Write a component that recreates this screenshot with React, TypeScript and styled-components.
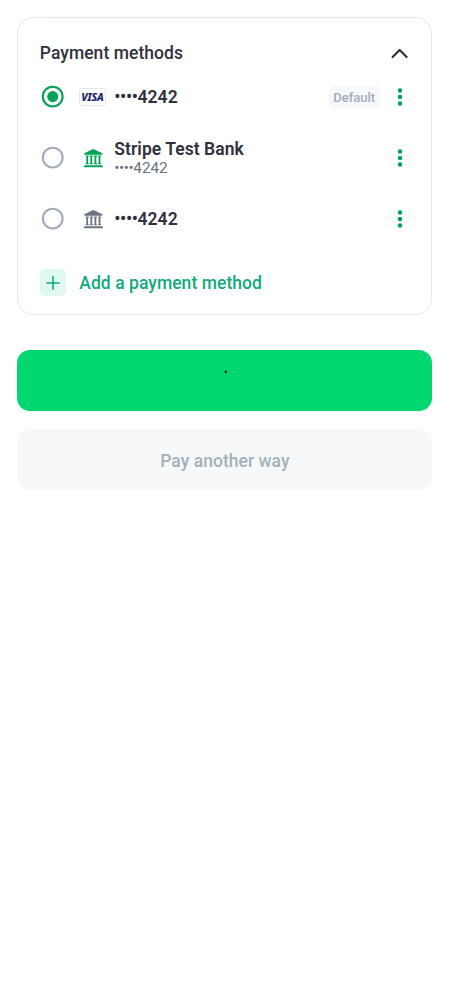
import React, { useState } from 'react';
import styled, { createGlobalStyle } from 'styled-components';

const GlobalStyle = createGlobalStyle`
  * { box-sizing: border-box; }
  body { margin: 0; background: #fff; font-family: Roboto, sans-serif; color: #30313d; }
  button { border: 0; padding: 0; background: none; font: inherit; color: inherit; cursor: pointer; }
  svg { display: block; }
`;

const Page = styled.main`
  width: 449.8px;
  padding: 17.4px;
`;

const Card = styled.section`
  height: 298px;
  padding: 0 20.8px 0 21.4px;
  border: 1.1px solid #e3e8ee;
  border-radius: 16px;
`;

const Header = styled.header`
  display: flex;
  align-items: center;
  justify-content: space-between;
  height: 47.7px;
  padding: 21px 0 0;
`;

const Title = styled.h2`
  margin: 0;
  font-size: 17.5px;
  line-height: 26px;
  font-weight: 500;
  letter-spacing: 0.05px;
`;

const IconButton = styled.button`
  display: grid;
  place-items: center;
  width: 22px;
  height: 26px;
`;

const Row = styled.div`
  display: flex;
  align-items: center;
  height: 61.1px;
`;

const RadioButton = styled.button`
  width: 23px;
  height: 23px;
  margin: 0 15px 0 1.5px;
`;

const Brand = styled.span`
  display: grid;
  place-items: center;
  width: 27px;
  margin-right: 8px;
`;

const Details = styled.div`
  flex: 1;
`;

const Name = styled.div`
  font-size: 17.5px;
  line-height: 20px;
  font-weight: 600;
  letter-spacing: 0.05px;
`;

const Account = styled.div`
  font-size: 15.3px;
  line-height: 18px;
  color: #6a7383;
`;

const Mask = styled.span`
  letter-spacing: -0.4px;
`;

const Badge = styled.span`
  width: 51px;
  height: 22px;
  margin-right: 9px;
  border-radius: 4.4px;
  background: #f6f8fa;
  color: #a3acba;
  font-size: 13.1px;
  line-height: 23px;
  font-weight: 500;
  letter-spacing: -0.08px;
  text-align: center;
`;

const AddRow = styled.button`
  display: flex;
  align-items: center;
  width: 100%;
  height: 66.6px;
  gap: 13px;
  color: #11a97d;
  font-size: 17.5px;
  font-weight: 500;
  letter-spacing: 0.05px;
`;

const PlusTile = styled.span`
  display: grid;
  place-items: center;
  width: 26.5px;
  height: 26.5px;
  border-radius: 5px;
  background: #dff9f0;
`;

const Action = styled.button<{ $primary?: boolean }>`
  display: flex;
  justify-content: center;
  align-items: ${p => (p.$primary ? 'flex-start' : 'center')};
  width: 100%;
  height: 61px;
  margin-top: ${p => (p.$primary ? '35px' : '18px')};
  padding-top: ${p => (p.$primary ? '7px' : '2px')};
  padding-left: ${p => (p.$primary ? '2px' : '0')};
  border-radius: 13px;
  background: ${p => (p.$primary ? '#00d770' : '#f6f8fa')};
  color: ${p => (p.$primary ? '#011e0f' : '#a3b1b9')};
  font-size: 17.5px;
  line-height: 20px;
  font-weight: 500;
  letter-spacing: 0.04px;
`;

const Radio = ({ checked, onSelect }: { checked: boolean; onSelect: () => void }) => (
  <RadioButton role="radio" aria-checked={checked} onClick={onSelect}>
    <svg width="23" height="23" viewBox="0 0 23 23">
      <circle cx="11.7" cy="11.6" r="9.9" fill="none" strokeWidth="2.1" stroke={checked ? '#00a355' : '#a3acba'} />
      {checked && <circle cx="11.7" cy="11.6" r="5.5" fill="#00a355" />}
    </svg>
  </RadioButton>
);

const BankIcon = ({ color }: { color: string }) => (
  <svg width="20" height="20" viewBox="0 0 20 20" fill={color}>
    <path d="M10.3 1 19.3 5.2V6.7H1.3V5.2Z" />
    <path d="M2.6 7.4h3.2v1h-.7v6.9h.7v1H2.6v-1h.7V8.4h-.7Zm4.1 0h3.2v1h-.7v6.9h.7v1H6.7v-1h.7V8.4h-.7Zm4.1 0h3.2v1h-.7v6.9h.7v1h-3.2v-1h.7V8.4h-.7Zm4.1 0h3.2v1h-.7v6.9h.7v1h-3.2v-1h.7V8.4h-.7Z" />
    <path d="M1.6 17.2h17.4l.8 1v1H.9v-1Z" />
  </svg>
);

const VisaText = styled.text`
  font: italic 700 9.8px 'Noto Sans', sans-serif;
`;

const VisaIcon = () => (
  <svg width="27" height="18" viewBox="0 0 27 18">
    <rect x=".5" y=".5" width="26" height="17" rx="2.5" fill="#fff" stroke="#e3e5e9" />
    <VisaText x="2.2" y="12.7" textLength="22.6" lengthAdjust="spacingAndGlyphs" fill="#171e6c" stroke="#171e6c" strokeWidth=".2">VISA</VisaText>
  </svg>
);

const MoreMenu = () => (
  <IconButton aria-label="More options">
    <svg width="6" height="20" viewBox="0 0 6 20" fill="#00a355">
      <circle cx="3" cy="3.4" r="2.25" />
      <circle cx="3" cy="10" r="2.25" />
      <circle cx="3" cy="16.6" r="2.25" />
    </svg>
  </IconButton>
);

const MaskedNumber = ({ last4 }: { last4: string }) => (
  <><Mask>••••</Mask>{last4}</>
);

const methods = [
  { name: <MaskedNumber last4="4242" />, icon: <VisaIcon />, isDefault: true },
  { name: 'Stripe Test Bank', account: <MaskedNumber last4="4242" />, icon: <BankIcon color="#00a355" /> },
  { name: <MaskedNumber last4="4242" />, icon: <BankIcon color="#6a7383" /> },
];

export default function App() {
  const [selected, setSelected] = useState(0);
  return (
    <>
      <GlobalStyle />
      <Page>
        <Card>
          <Header>
            <Title>Payment methods</Title>
            <IconButton aria-label="Collapse">
              <svg width="18" height="12" viewBox="0 0 18 12" fill="none" stroke="#30313d" strokeWidth="2.2" strokeLinecap="round" strokeLinejoin="round">
                <path d="m1.6 10 7-7 7 7" />
              </svg>
            </IconButton>
          </Header>
          {methods.map((m, i) => (
            <Row key={i}>
              <Radio checked={selected === i} onSelect={() => setSelected(i)} />
              <Brand>{m.icon}</Brand>
              <Details>
                <Name>{m.name}</Name>
                {m.account && <Account>{m.account}</Account>}
              </Details>
              {m.isDefault && <Badge>Default</Badge>}
              <MoreMenu />
            </Row>
          ))}
          <AddRow>
            <PlusTile>
              <svg width="14" height="14" viewBox="0 0 14 14" fill="none" stroke="#11a97d" strokeWidth="1.6" strokeLinecap="round">
                <path d="M7 .9v12.2M.9 7h12.2" />
              </svg>
            </PlusTile>
            Add a payment method
          </AddRow>
        </Card>
        <Action $primary>.</Action>
        <Action>Pay another way</Action>
      </Page>
    </>
  );
}
